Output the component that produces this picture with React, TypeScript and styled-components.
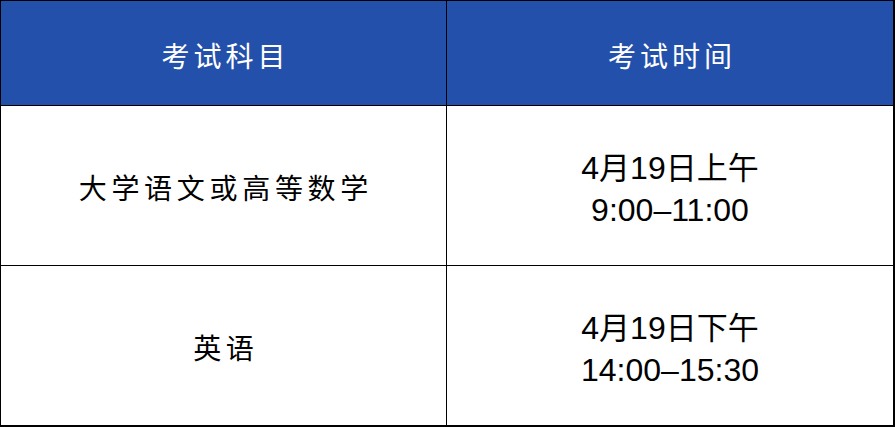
import React from "react";
import styled, { createGlobalStyle } from "styled-components";

const Global = createGlobalStyle`
  html, body { margin: 0; padding: 0; background: #ffffff; }
  body { width: 895px; height: 427px; overflow: hidden; }
`;

const Table = styled.div`
  box-sizing: border-box;
  width: 895px;
  height: 427px;
  display: grid;
  grid-template-columns: 446px 1fr;
  grid-template-rows: 105px 160px 1fr;
  border-top: 1px solid #000;
  border-left: 1px solid #000;
  border-right: 2px solid #000;
  border-bottom: 2px solid #000;
  font-family: "Liberation Sans", "Noto Sans CJK SC", sans-serif;
`;

const Cell = styled.div<{ $head?: boolean; $lastCol?: boolean; $lastRow?: boolean }>`
  box-sizing: border-box;
  display: flex;
  flex-direction: column;
  align-items: center;
  justify-content: center;
  background: ${(p) => (p.$head ? "#2350ab" : "#ffffff")};
  color: ${(p) => (p.$head ? "#ffffff" : "#000000")};
  border-right: ${(p) => (p.$lastCol ? "none" : "1.5px solid #000")};
  border-bottom: ${(p) => (p.$lastRow ? "none" : "1.5px solid #000")};
`;

const HeadText = styled.span`
  font-family: "Noto Sans CJK SC", sans-serif;
  font-size: 28px;
  letter-spacing: 4px;
  margin-left: 4px;
  line-height: 1;
  margin-top: 4px;
`;

const SubjectText = styled.span<{ $spacing: number }>`
  font-family: "Noto Sans CJK SC", sans-serif;
  font-size: 28px;
  letter-spacing: ${(p) => p.$spacing}px;
  margin-left: ${(p) => p.$spacing}px;
  line-height: 1;
  margin-top: 2px;
`;

const TimeLine = styled.span`
  font-family: "Liberation Sans", "Noto Sans CJK SC", sans-serif;
  font-size: 32px;
  line-height: 42px;
  white-space: nowrap;
`;

const Cjk = styled.span`
  font-family: "Noto Sans CJK SC", sans-serif;
  font-size: 31px;
`;

const TimeBlock = styled.div`
  display: flex;
  flex-direction: column;
  align-items: center;
  margin-top: 4px;
`;

export default function App() {
  return (
    <>
      <Global />
      <Table>
        <Cell $head>
          <HeadText>考试科目</HeadText>
        </Cell>
        <Cell $head $lastCol>
          <HeadText>考试时间</HeadText>
        </Cell>

        <Cell>
          <SubjectText $spacing={4.7}>大学语文或高等数学</SubjectText>
        </Cell>
        <Cell $lastCol>
          <TimeBlock>
            <TimeLine>
              4<Cjk>月</Cjk>19<Cjk>日上午</Cjk>
            </TimeLine>
            <TimeLine>9:00–11:00</TimeLine>
          </TimeBlock>
        </Cell>

        <Cell $lastRow>
          <SubjectText $spacing={4.7}>英语</SubjectText>
        </Cell>
        <Cell $lastCol $lastRow>
          <TimeBlock>
            <TimeLine>
              4<Cjk>月</Cjk>19<Cjk>日下午</Cjk>
            </TimeLine>
            <TimeLine>14:00–15:30</TimeLine>
          </TimeBlock>
        </Cell>
      </Table>
    </>
  );
}
